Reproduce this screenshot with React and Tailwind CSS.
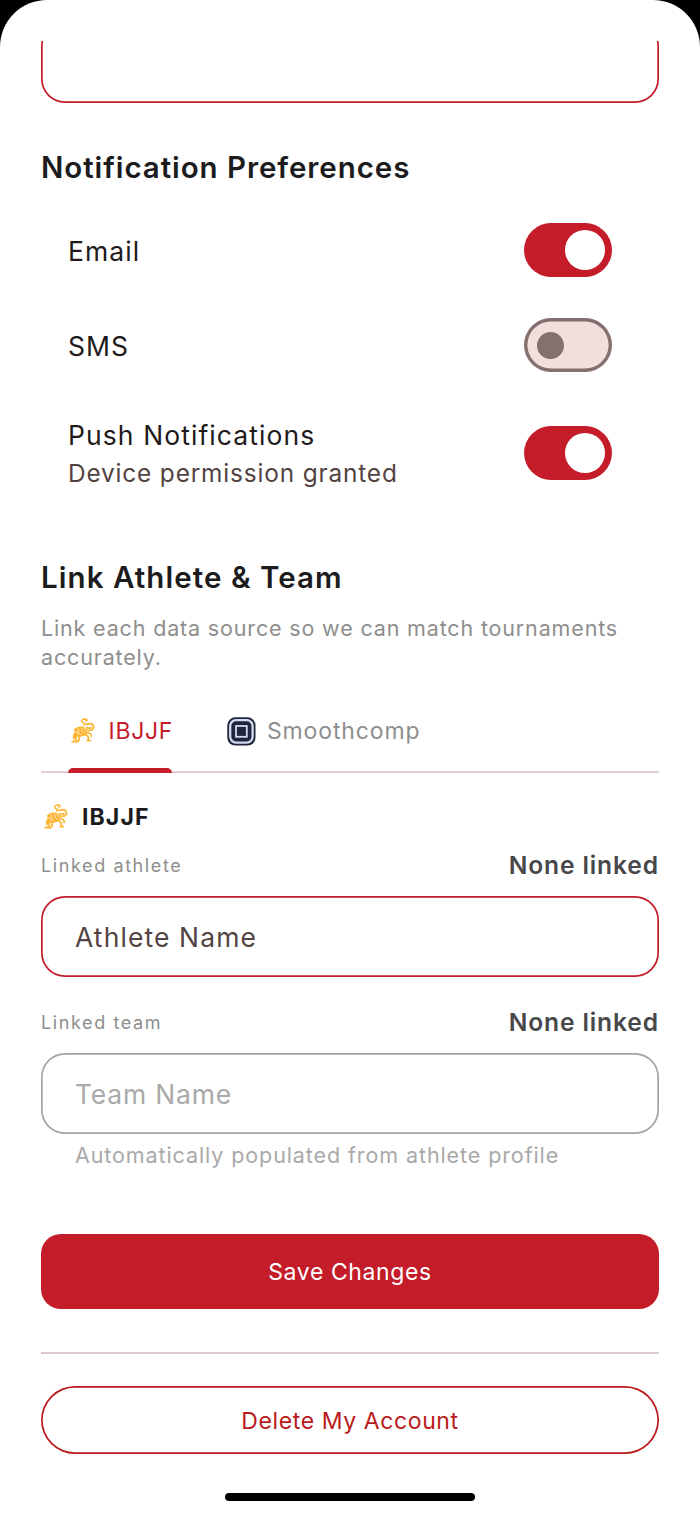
import React from "react";

function Switch({ on = false }) {
  if (on) {
    return (
      <div className="flex h-[54px] w-[88px] shrink-0 items-center justify-end rounded-full bg-[#c51c29] pr-[6.600px]">
        <div className="size-[40.600px] rounded-full bg-white" />
      </div>
    );
  }
  return (
    <div className="flex h-[54px] w-[88px] shrink-0 items-center rounded-full bg-[#f2dedd] pl-[13.300px] shadow-[inset_0_0_0_3.4px_#84706e]">
      <div className="size-[27px] rounded-full bg-[#84706e]" />
    </div>
  );
}

function LionIcon() {
  return (
    <svg width="24" height="28" viewBox="0 0 24 28" fill="none" stroke="#fdb32e" strokeLinecap="round" strokeLinejoin="round">
      <path d="M13 6C10.800 5.500 9.800 3.900 11.200 2.700c1.200-1 3.900-1 4.800 0 .5.900-.4 1.600-1.600 1.400" strokeWidth="1.400" />
      <path d="M13 7.800c1.600-1 2.900-1 3.900-.4 1.200-1.100 3.600-1 4.600.2 1 1.300 1.300 3.100.6 4.200-.7 1-2 1.400-3.200 1.100" strokeWidth="1.700" />
      <path d="M15.500 10.400c1.500 1 3.200 1 4.600.1M15 12.500l2.800 1.400" strokeWidth="1.500" />
      <path d="M3.500 12.300c2.200-2.300 5.900-3.100 10-2 2 1.600 2.800 4.200 2 6.600-2.200 2-6 2.800-9.500 2.600-1.600.6-2.800 1.800-3.400 3.200-.9-2.600-.7-5 1-6.800z" fill="#fdb32e" strokeWidth="0.600" />
      <path d="M3.800 14.400c2 .2 3.300 1.400 3.300 3.400M7.300 11.700c-.5 2.500.6 4.500 2.800 6.200M10.700 10.900c-.7 2.100.4 4.100 3 5.400M13.300 10.600c-.3 1.300.2 2.300 1.500 3" stroke="#ffffff" strokeWidth="0.700" />
      <path d="M4.800 19.800c1 2.200.2 4-1.900 4.900H1.200M8 20.200c.8 1.800.1 3.400-1.700 4.600H5" strokeWidth="1.700" />
      <path d="M14 17.800c2.400.6 3.700 2.200 3.300 4.200-.1.700-.5 1.200-.9 1.600h2.800M16.200 16c2.800-.1 4.200 1.200 4 3.300" strokeWidth="1.700" />
    </svg>
  );
}

function SmoothcompIcon() {
  return (
    <svg width="29" height="29" viewBox="0 0 29 29" fill="none">
      <rect x="0.300" y="0.300" width="28.200" height="28.200" rx="8" fill="#20263d" />
      <rect x="3.200" y="3.200" width="22.400" height="22.400" rx="5.800" stroke="#d3daf0" strokeWidth="2.300" />
      <rect x="9" y="9" width="10.800" height="10.800" stroke="#d3daf0" strokeWidth="1.800" />
    </svg>
  );
}

export default function App() {
  return (
    <div className="h-[1515px] w-[700px] bg-black font-['Inter','Liberation_Sans',sans-serif] whitespace-nowrap">
      <main className="flex h-full flex-col overflow-hidden rounded-t-[47px] bg-white px-[41px] pt-[41px]">
        <div className="flex h-[62px] shrink-0 flex-col justify-end overflow-hidden">
          <div className="h-[81px] shrink-0 rounded-[24px] shadow-[inset_0_0_0_1.7px_#c51c29]" />
        </div>

        <h2 className="mt-[46px] h-[36px] text-[29.500px] leading-[36px] font-[560] tracking-[0.93px] text-[#1c1c1e]">
          <span>Notification Preferences</span>
        </h2>

        <div className="mt-[38px] flex h-[54px] items-center justify-between pr-[47px] pl-[27px]">
          <span className="mt-[3px] text-[26.500px] tracking-[1.1px] text-[#201a1a]">Email</span>
          <Switch on />
        </div>
        <div className="mt-[41px] flex h-[54px] items-center justify-between pr-[47px] pl-[27px]">
          <span className="mt-[3px] text-[26.500px] tracking-[1px] text-[#201a1a]">SMS</span>
          <Switch />
        </div>
        <div className="mt-[43px] flex h-[76px] items-center justify-between pr-[47px] pl-[27px]">
          <div className="flex flex-col">
            <span className="h-[38px] text-[26.500px] leading-[38px] tracking-[1.09px] text-[#201a1a]">Push Notifications</span>
            <span className="h-[36px] text-[24.400px] leading-[38px] tracking-[0.84px] text-[#534342]">Device permission granted</span>
          </div>
          <Switch on />
        </div>

        <h2 className="mt-[68px] h-[36px] text-[29.500px] leading-[36px] font-[560] tracking-[1.06px] text-[#1c1c1e]">
          <span>Link Athlete &amp; Team</span>
        </h2>
        <p className="mt-[19px] h-[58px] text-[21.500px] leading-[29px] tracking-[0.84px] text-[#8e8e8e]">
          <span>Link each data source so we can match tournaments</span>
          <br />
          <span>accurately.</span>
        </p>

        <div className="mt-[29px] flex h-[72px] items-stretch gap-[55px] pl-[27px] text-[23px] shadow-[inset_0_-1.7px_0_#dccbca]">
          <div className="flex w-[104px] flex-col">
            <div className="flex h-[60px] items-center gap-[13.500px] text-[#c51c29]">
              <div className="ml-[3px]"><LionIcon /></div>
              <span className="tracking-[0.7px]">IBJJF</span>
            </div>
            <div className="mt-[7px] h-[5px] rounded-t-[5px] bg-[#c51c29]" />
          </div>
          <div className="flex h-[60px] items-center gap-[11px] text-[#8e8e8e]">
            <SmoothcompIcon />
            <span className="tracking-[0.86px]">Smoothcomp</span>
          </div>
        </div>

        <div className="mt-[30px] flex h-[28px] items-center gap-[14px] pl-[3px]">
          <LionIcon />
          <span className="text-[23px] font-[650] tracking-[1.1px] text-[#1c1c1e]">IBJJF</span>
        </div>
        <div className="mt-[18px] flex h-[32px] items-center justify-between">
          <span className="text-[18px] tracking-[1.6px] text-[#8e8e8e]">Linked athlete</span>
          <span className="text-[24.600px] font-[560] tracking-[0.88px] text-[#48484a]">None linked</span>
        </div>
        <div className="mt-[15px] flex h-[81px] shrink-0 items-center rounded-[24px] pl-[34px] shadow-[inset_0_0_0_1.7px_#c51c29]">
          <span className="mt-[2px] text-[26.500px] tracking-[1.1px] text-[#534342]">Athlete Name</span>
        </div>

        <div className="mt-[29px] flex h-[32px] items-center justify-between">
          <span className="text-[18px] tracking-[1.6px] text-[#8e8e8e]">Linked team</span>
          <span className="text-[24.600px] font-[560] tracking-[0.88px] text-[#48484a]">None linked</span>
        </div>
        <div className="mt-[15px] flex h-[81px] shrink-0 items-center rounded-[24px] pl-[34px] shadow-[inset_0_0_0_1.7px_#a8a2a2]">
          <span className="mt-[2px] text-[26.500px] tracking-[0.8px] text-[#a9a9a9]">Team Name</span>
        </div>
        <p className="mt-[7px] h-[29px] pl-[34px] text-[21.500px] leading-[29px] tracking-[0.9px] text-[#a9a9a9]">
          <span>Automatically populated from athlete profile</span>
        </p>

        <button className="mt-[64px] h-[74.500px] shrink-0 rounded-[20px] bg-[#c51c29] pt-[2px] text-[23px] tracking-[0.6px] text-white">
          <span>Save Changes</span>
        </button>
        <div className="mt-[43px] h-[2px] shrink-0 bg-[#dccbca]" />
        <button className="mt-[32.500px] h-[68px] shrink-0 rounded-full pt-[1.500px] text-[23px] tracking-[0.6px] text-[#b91a1a] shadow-[inset_0_0_0_1.7px_#b91a1a]">
          <span>Delete My Account</span>
        </button>
        <div className="mt-[39px] h-[8px] w-[250px] shrink-0 self-center rounded-full bg-black" />
      </main>
    </div>
  );
}
